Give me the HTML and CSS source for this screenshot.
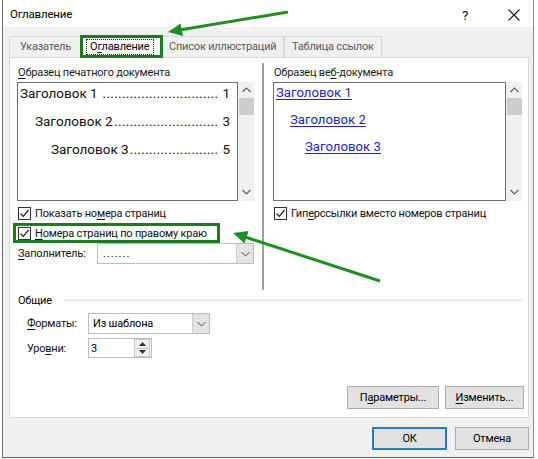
FILE: index.html
```html
<!DOCTYPE html>
<html lang="ru">
<head>
<meta charset="utf-8">
<title>Оглавление</title>
<link rel="stylesheet" href="styles.css">
</head>
<body>
<div class="dialog">
  <div class="titlebar">
    <span class="title">Оглавление</span>
    <span class="help">?</span>
    <span class="close"><svg width="12" height="12" viewBox="0 0 12 12"><path d="M0.5 0.5L11.5 11.5M11.5 0.5L0.5 11.5" stroke="#1a1a1a" stroke-width="1.1" fill="none"/></svg></span>
  </div>
  <div class="content">
    <div class="tabs">
      <div class="tab t1">Указатель</div>
      <div class="tab sel"><span class="focus">О<u>г</u>лавление</span></div>
      <div class="tab t3">Список иллюстраций</div>
      <div class="tab t4">Таблица ссылок</div>
    </div>
    <div class="panel">
      <div class="top">
        <div class="col">
          <div class="lbl"><u>О</u>бразец печатного документа</div>
          <div class="previewwrap">
            <div class="preview">
              <div class="toc l1"><span class="name">Заголовок 1&nbsp;</span><span class="lead">..............................</span><span class="num">1</span></div>
              <div class="toc l2"><span class="name">Заголовок 2</span><span class="lead">...........................</span><span class="num">3</span></div>
              <div class="toc l3"><span class="name">Заголовок 3</span><span class="lead">.......................</span><span class="num">5</span></div>
            </div>
            <div class="scroll">
              <svg class="sup" width="9" height="6" viewBox="0 0 9 6"><path d="M0.5 5L4.5 1L8.5 5" stroke="#606060" fill="none" stroke-width="1.2"/></svg>
              <div class="thumb"></div>
              <svg class="sdown" width="9" height="6" viewBox="0 0 9 6"><path d="M0.5 1L4.5 5L8.5 1" stroke="#606060" fill="none" stroke-width="1.2"/></svg>
            </div>
          </div>
          <div class="chk c1"><span class="box"><svg width="11" height="11" viewBox="0 0 11 11"><path d="M1.5 5.5L4.2 8.3L9.6 2" stroke="#222" fill="none" stroke-width="1.2"/></svg></span><span>Показать но<u>м</u>ера страниц</span></div>
          <div class="chk hl"><span class="box"><svg width="11" height="11" viewBox="0 0 11 11"><path d="M1.5 5.5L4.2 8.3L9.6 2" stroke="#222" fill="none" stroke-width="1.2"/></svg></span><span><u>Н</u>омера страниц по правому краю</span></div>
          <div class="fillrow">
            <span class="fl"><u>З</u>аполнитель:</span>
            <div class="combo cfill"><span class="val">.......</span><span class="arrow"><svg width="9" height="6" viewBox="0 0 9 6"><path d="M0.5 1L4.5 5L8.5 1" stroke="#505050" fill="none" stroke-width="1"/></svg></span></div>
          </div>
        </div>
        <div class="vsep"></div>
        <div class="col">
          <div class="lbl">Образец ве<u>б</u>-документа</div>
          <div class="previewwrap">
            <div class="preview">
              <div class="link k1">Заголовок 1</div>
              <div class="link k2">Заголовок 2</div>
              <div class="link k3">Заголовок 3</div>
            </div>
            <div class="scroll">
              <svg class="sup" width="9" height="6" viewBox="0 0 9 6"><path d="M0.5 5L4.5 1L8.5 5" stroke="#606060" fill="none" stroke-width="1.2"/></svg>
              <div class="thumb"></div>
              <svg class="sdown" width="9" height="6" viewBox="0 0 9 6"><path d="M0.5 1L4.5 5L8.5 1" stroke="#606060" fill="none" stroke-width="1.2"/></svg>
            </div>
          </div>
          <div class="chk c1 r1"><span class="box"><svg width="11" height="11" viewBox="0 0 11 11"><path d="M1.5 5.5L4.2 8.3L9.6 2" stroke="#222" fill="none" stroke-width="1.2"/></svg></span><span>Гип<u>е</u>рссылки вместо номеров страниц</span></div>
        </div>
      </div>
      <div class="group">
        <div class="ghead"><span>Общие</span><span class="hline"></span></div>
        <div class="frow">
          <span class="flbl"><u>Ф</u>орматы:</span>
          <div class="combo cfmt"><span class="val">Из шаблона</span><span class="arrow"><svg width="9" height="6" viewBox="0 0 9 6"><path d="M0.5 1L4.5 5L8.5 1" stroke="#505050" fill="none" stroke-width="1"/></svg></span></div>
        </div>
        <div class="frow f2">
          <span class="flbl">Уро<u>в</u>ни:</span>
          <div class="spin"><span class="val">3</span><span class="sbtns"><span class="sb"><svg width="7" height="4" viewBox="0 0 7 4"><path d="M0 4L3.5 0L7 4Z" fill="#303030"/></svg></span><span class="sb"><svg width="7" height="4" viewBox="0 0 7 4"><path d="M0 0L3.5 4L7 0Z" fill="#303030"/></svg></span></span></div>
        </div>
      </div>
      <div class="btnrow">
        <button class="btn bparam">П<u>а</u>раметры...</button>
        <button class="btn bedit"><u>И</u>зменить...</button>
      </div>
    </div>
    <div class="footer">
      <button class="btn ok">ОК</button>
      <button class="btn cancel">Отмена</button>
    </div>
  </div>
</div>
<svg class="arrows" width="538" height="459" viewBox="0 0 538 459">
  <line x1="288" y1="12" x2="181" y2="29.8" stroke="#1f8f22" stroke-width="3"/>
  <polygon points="168,32 183,36 180.5,23.5" fill="#1f8f22"/>
  <line x1="380" y1="281" x2="246" y2="237.3" stroke="#1f8f22" stroke-width="3"/>
  <polygon points="233,233 244.5,243.5 248.5,231" fill="#1f8f22"/>
</svg>
</body>
</html>
```

FILE: styles.css
```css
* { box-sizing: border-box; }
html, body { margin: 0; padding: 0; }
body {
  width: 538px;
  height: 459px;
  background: #ffffff;
  font-family: Roboto, "Noto Sans", "Liberation Sans", sans-serif;
  font-size: 11px;
  letter-spacing: -0.2px;
  color: #000;
  position: relative;
  overflow: hidden;
}
u { text-decoration: underline; text-underline-offset: 2px; }

.dialog {
  margin-left: 2px;
  width: 532px;
  height: 458px;
  border-left: 1px solid #6f6f6f;
  border-right: 1px solid #8c8c8c;
  border-bottom: 1px solid #5a626a;
  background: #f0f0f0;
  display: flex;
  flex-direction: column;
}

.titlebar {
  height: 27px;
  background: #ffffff;
  display: flex;
  align-items: center;
  padding-left: 7px;
  position: relative;
}
.title { font-size: 11.5px; color: #000; flex: 1; padding-top: 1px; }
.help { font-size: 13.5px; width: 14px; margin-right: 32px; padding-top: 2px; color: #111; }
.close { width: 12px; height: 12px; margin-right: 13px; display: flex; margin-top: 2px; }

.content {
  flex: 1;
  padding: 8px 4px 0 6px;
  display: flex;
  flex-direction: column;
}

.tabs {
  height: 22px;
  display: flex;
  align-items: flex-end;
  position: relative;
  z-index: 2;
}
.tab {
  height: 21px;
  border: 1px solid #d9d9d9;
  border-bottom: none;
  background: #f0f0f0;
  color: #5c5c5c;
  padding-left: 10px;
  line-height: 19px;
  white-space: nowrap;
  margin-bottom: 0;
}
.t1 { width: 71px; border-right: none; }
.sel {
  width: 83px;
  height: 23px;
  margin-bottom: -1px;
  background: #ffffff;
  border: 3px solid #1a7d1a;
  color: #000;
  padding-left: 3px;
  line-height: 15px;
  padding-top: 1px;
}
.focus { border: 1px dotted #222; padding: 0 4px 0 3px; display: inline-block; line-height: 14px; }
.t3 { width: 121px; border-left: none; padding-left: 6px; }
.t4 { width: 98px; border-left: 1px solid #d9d9d9; padding-left: 7px; }

.panel {
  height: 361px;
  background: #ffffff;
  border: 1px solid #d9d9d9;
  padding: 7px 6px 0 7px;
  display: flex;
  flex-direction: column;
}

.top {
  height: 225px;
  display: grid;
  grid-template-columns: 237px 1px 1fr;
  column-gap: 9px;
}
.vsep { background: #a0a0a0; margin-top: -2px; margin-left: -1px; }
.col { display: flex; flex-direction: column; }
.lbl { height: 15px; line-height: 15px; color: #1a1a1a; padding-left: 1px; white-space: nowrap; }

.previewwrap {
  margin-top: 2px;
  height: 119px;
  display: flex;
}
.preview {
  flex: 1;
  min-width: 0;
  border: 1px solid #6e6e6e;
  background: #fff;
  padding-top: 0;
  overflow: hidden;
}
.scroll {
  width: 16px;
  flex-shrink: 0;
  background: #f0f0f0;
  position: relative;
  display: flex;
  flex-direction: column;
  align-items: center;
}
.sup { margin-top: 5px; }
.thumb { width: 15px; height: 17px; background: #cdcdcd; margin-top: 5px; }
.sdown { margin-top: auto; margin-bottom: 6px; }

.toc {
  display: flex;
  font-size: 13.5px;
  letter-spacing: 0;
  height: 20px;
  line-height: 20px;
  margin-top: 8px;
  padding-right: 7px;
  white-space: nowrap;
  color: #111;
}
.toc.l1 { margin-top: 0; padding-left: 2px; }
.toc.l2 { padding-left: 17px; }
.toc.l3 { padding-left: 33px; }
.toc .name { flex-shrink: 0; }
.toc .lead { flex: 1; min-width: 0; overflow: hidden; text-align: right; letter-spacing: 0.3px; }
.toc .num { flex-shrink: 0; padding-left: 4px; }

.link {
  font-size: 13.2px;
  letter-spacing: 0;
  color: #2424c8;
  text-decoration: underline;
  text-underline-offset: 2px;
  height: 20px;
  line-height: 20px;
  margin-top: 7px;
  white-space: nowrap;
}
.link.k1 { margin-top: 0; padding-left: 2px; }
.link.k2 { padding-left: 16px; }
.link.k3 { padding-left: 31px; }

.chk {
  display: flex;
  align-items: center;
  height: 16px;
  margin-top: 4px;
  white-space: nowrap;
  color: #111;
}
.box {
  width: 13px;
  height: 13px;
  border: 1px solid #333;
  background: #fff;
  display: flex;
  align-items: center;
  justify-content: center;
  margin-left: 1px;
  margin-right: 4px;
  flex-shrink: 0;
}
.chk.hl {
  margin-top: 2px;
  margin-left: -4px;
  width: 207px;
  height: 20px;
  border: 3px solid #1a7d1a;
  padding-left: 1px;
}

.fillrow { display: flex; align-items: center; height: 21px; }
.fl { width: 80px; padding-left: 1px; color: #111; }
.combo {
  height: 21px;
  border: 1px solid #bdbdbd;
  background: #fff;
  display: flex;
  align-items: center;
}
.combo .val { flex: 1; padding-left: 5px; white-space: nowrap; }
.combo .arrow {
  width: 17px;
  height: 19px;
  background: #e3e3e3;
  border-left: 1px solid #cfcfcf;
  display: flex;
  align-items: center;
  justify-content: center;
}
.cfill { width: 157px; }
.cfill .val { letter-spacing: 1px; }
.cfmt { width: 122px; }
.cfmt .val { padding-left: 4px; }

.group { display: flex; flex-direction: column; margin-top: 2px; }
.ghead { display: flex; align-items: center; height: 16px; padding-left: 1px; }
.hline { flex: 1; height: 1px; background: #dcdcdc; margin-left: 11px; }
.frow { display: flex; align-items: center; height: 21px; margin-top: 5px; }
.frow.f2 { height: 20px; margin-top: 4px; }
.flbl { width: 71px; padding-left: 10px; color: #111; }
.spin {
  width: 64px;
  height: 20px;
  border: 1px solid #bdbdbd;
  background: #fff;
  display: flex;
  align-items: center;
}
.spin .val { flex: 1; padding-left: 2px; }
.sbtns { width: 16px; height: 18px; display: flex; flex-direction: column; margin-right: 1px; }
.sb {
  flex: 1;
  border: 1px solid #c8c8c8;
  background: #efefef;
  display: flex;
  align-items: center;
  justify-content: center;
}
.sb + .sb { border-top: none; }

.btnrow {
  margin-top: 28px;
  display: flex;
  justify-content: flex-end;
  gap: 6px;
  margin-right: -2px;
}
.btn {
  height: 23px;
  background: #e1e1e1;
  border: 1px solid #adadad;
  font-family: Roboto, "Noto Sans", "Liberation Sans", sans-serif;
  font-size: 11px;
  letter-spacing: -0.2px;
  color: #000;
  padding: 0;
  margin: 0;
  line-height: 19px;
}
.bparam { width: 92px; }
.bedit { width: 79px; }

.footer {
  margin-top: 9px;
  display: flex;
  justify-content: flex-end;
  gap: 8px;
  padding-right: 0;
}
.ok { width: 75px; border: 2px solid #2a78c6; }
.cancel { width: 74px; }

.arrows { position: absolute; left: 0; top: 0; pointer-events: none; z-index: 10; }
```
